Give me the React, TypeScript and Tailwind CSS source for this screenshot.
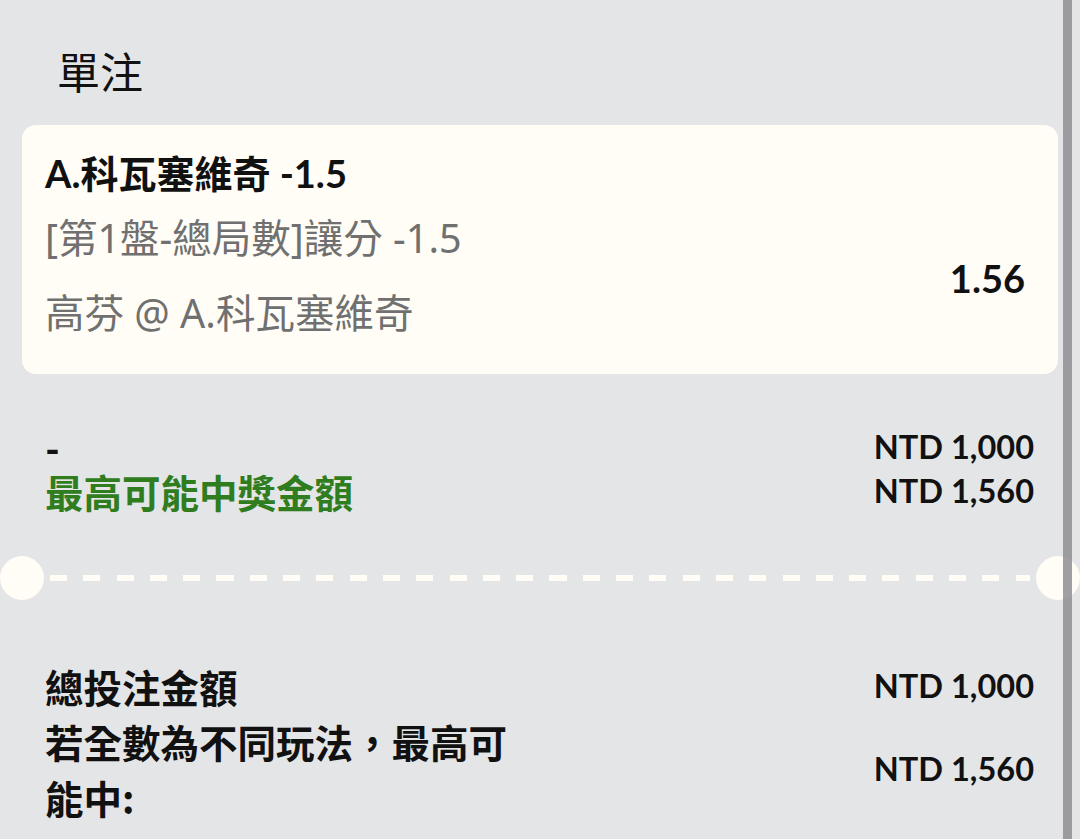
import React from "react";

export default function App() {
  return (
    <div className="relative w-[1080px] h-[839px] overflow-hidden bg-[#e4e5e7] text-[#111] font-['Lato','Noto_Sans_CJK_TC',sans-serif]">
      {/* header */}
      <div className="pt-[42px] pl-[57px] h-[125px]">
        <div className="text-[43px] leading-[56px] font-normal font-['Noto_Sans_CJK_TC',sans-serif]">單注</div>
      </div>

      {/* bet card */}
      <div className="mx-[22px] h-[249px] rounded-[14px] bg-[#fffdf6] flex justify-between pl-[23px] pr-[33px]">
        <div className="flex flex-col">
          <div className="mt-[24px] text-[38px] leading-[48px] font-bold">A.科瓦塞維奇 -1.5</div>
          <div className="mt-[17px] text-[39.5px] leading-[48px] text-[#707070] font-['Noto_Sans','Noto_Sans_CJK_TC',sans-serif]">
            [第1盤-總局數]讓分 -1.5
          </div>
          <div className="mt-[27px] text-[39.5px] leading-[48px] text-[#707070] font-['Noto_Sans','Noto_Sans_CJK_TC',sans-serif]">
            高芬 @ A.科瓦塞維奇
          </div>
        </div>
        <div className="pt-[129px] text-[38px] leading-[48px] font-bold">1.56</div>
      </div>

      {/* potential win */}
      <div className="mt-[51px] pl-[45px] pr-[46px] text-[32.5px] font-bold">
        <div className="flex justify-between items-center h-[44px]">
          <span className="leading-none pt-[4px] text-[40px]">-</span>
          <span className="leading-none">NTD 1,000</span>
        </div>
        <div className="flex justify-between items-center h-[44px]">
          <span className="leading-none text-[38.5px] text-[#2f7d1f] font-['Noto_Sans_CJK_TC',sans-serif]">最高可能中獎金額</span>
          <span className="leading-none">NTD 1,560</span>
        </div>
      </div>

      {/* divider */}
      <div className="mt-[43px] flex items-center h-[44px]">
        <div className="w-[44px] h-[44px] rounded-full bg-[#fffdf5] shrink-0" />
        <div className="flex-1 mx-[6px] h-[6px] bg-[repeating-linear-gradient(90deg,#fffdf5_0px,#fffdf5_17px,transparent_17px,transparent_33.3px)]" />
        <div className="w-[44px] h-[44px] rounded-full bg-[#fffdf5] shrink-0" />
      </div>

      {/* totals */}
      <div className="mt-[58px] pl-[45px] pr-[46px] text-[32.5px] font-bold">
        <div className="flex justify-between items-center h-[56px]">
          <span className="leading-none text-[38.5px] font-['Noto_Sans_CJK_TC',sans-serif]">總投注金額</span>
          <span className="leading-none">NTD 1,000</span>
        </div>
        <div className="flex justify-between items-center">
          <span className="w-[480px] leading-[55.5px] text-[38.5px] font-['Noto_Sans_CJK_TC',sans-serif]">
            若全數為不同玩法，最高可能中:
          </span>
          <span className="leading-none">NTD 1,560</span>
        </div>
      </div>

      {/* scrollbar */}
      <div className="absolute top-0 left-[1063px] w-[9px] h-full bg-[#8f8f93]/85" />
    </div>
  );
}
